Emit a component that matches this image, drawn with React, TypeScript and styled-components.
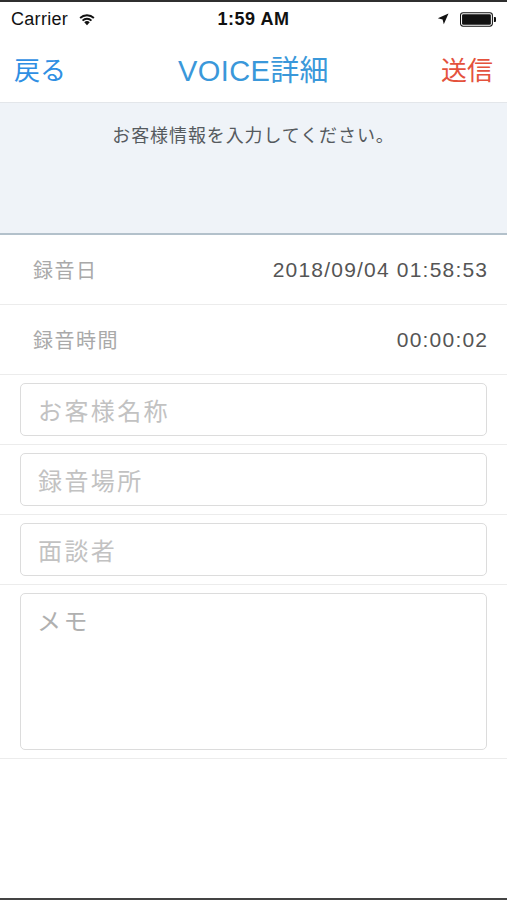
import React from 'react';
import styled, { createGlobalStyle } from 'styled-components';

const GlobalStyle = createGlobalStyle`
    html, body {
        margin: 0;
        padding: 0;
        background: #ffffff;
    }
    * {
        box-sizing: border-box;
    }
`;

const FONT = `"Liberation Sans", "Noto Sans CJK JP", sans-serif`;

const Screen = styled.div`
    display: flex;
    flex-direction: column;
    width: 507px;
    height: 900px;
    border-top: 2px solid #2f2f2f;
    border-bottom: 2px solid #444444;
    font-family: ${FONT};
    background: #ffffff;
    overflow: hidden;
`;

const StatusBar = styled.div`
    display: grid;
    grid-template-columns: 1fr auto 1fr;
    align-items: center;
    height: 34px;
    padding: 0 11px;
    font-size: 18px;
    color: #111;
`;

const StatusLeft = styled.div`
    display: flex;
    align-items: center;
    gap: 10px;
    letter-spacing: 0.3px;
`;

const StatusTime = styled.div`
    font-weight: 700;
    letter-spacing: 0.5px;
`;

const StatusRight = styled.div`
    display: flex;
    align-items: center;
    justify-content: flex-end;
    gap: 11px;
`;

const NavBar = styled.div`
    display: grid;
    grid-template-columns: 1fr auto 1fr;
    align-items: center;
    height: 67px;
    padding: 0 14px 2px 14px;
    border-bottom: 1px solid #e3e6ea;
`;

const NavButton = styled.div<{ $color: string; $align: string }>`
    color: ${(p) => p.$color};
    font-size: 26px;
    justify-self: ${(p) => p.$align};
`;

const NavTitle = styled.div`
    color: #3a98da;
    font-size: 29px;
    letter-spacing: 0.4px;
`;

const InfoPanel = styled.div`
    height: 132px;
    padding-top: 18px;
    background: #eff3f8;
    border-bottom: 2px solid #b3c1cb;
    text-align: center;
    font-size: 18px;
    letter-spacing: 0.9px;
    color: #555a5e;
`;

const Row = styled.div<{ $pad?: string }>`
    display: flex;
    align-items: center;
    justify-content: space-between;
    min-height: 70px;
    padding: ${(p) => p.$pad || '0 20px 0 33px'};
    border-bottom: 1px solid #ececec;
`;

const Label = styled.div`
    font-size: 20px;
    letter-spacing: 1.5px;
    color: #a9a9a9;
`;

const Value = styled.div`
    font-size: 21px;
    letter-spacing: 1.2px;
    margin-right: -1.2px;
    color: #555555;
`;

const Field = styled.div<{ $tall?: boolean }>`
    flex: 1;
    height: ${(p) => (p.$tall ? '157px' : '53px')};
    border: 1px solid #dcdcdc;
    border-radius: 5px;
    padding: ${(p) => (p.$tall ? '8px 16px' : '0 17px')};
    display: flex;
    align-items: ${(p) => (p.$tall ? 'flex-start' : 'center')};
    font-size: 24px;
    letter-spacing: 2.4px;
    color: #c2c2c2;
`;

const MemoText = styled.span`
    color: #b0b0b0;
`;

const Wifi = () => (
    <svg width="18" height="13" viewBox="0 0 17 12">
        <path d="M8.5 11.5 L5.9 8.6 A3.8 3.8 0 0 1 11.1 8.6 Z" fill="#111" />
        <path d="M3.7 6.4 A6.9 6.9 0 0 1 13.3 6.4 L12.1 7.7 A5.2 5.2 0 0 0 4.9 7.7 Z" fill="#111" />
        <path d="M1.4 3.9 A10.2 10.2 0 0 1 15.6 3.9 L14.4 5.2 A8.5 8.5 0 0 0 2.6 5.2 Z" fill="#111" />
    </svg>
);

const LocationArrow = () => (
    <svg width="12" height="12" viewBox="0 0 12 12">
        <path d="M11.5 0.5 L0.8 5.2 L5.6 6.4 L6.8 11.2 Z" fill="#111" />
    </svg>
);

const Battery = () => (
    <svg width="36" height="15" viewBox="0 0 35 14">
        <rect x="0.5" y="0.5" width="31" height="13" rx="2.5" fill="none" stroke="#111" />
        <rect x="2" y="2" width="28" height="10" rx="1.2" fill="#111" />
        <path d="M33 4.5 h1 a1 1 0 0 1 1 1 v3 a1 1 0 0 1 -1 1 h-1 Z" fill="#111" />
    </svg>
);

const details = [
    { label: '録音日', value: '2018/09/04 01:58:53' },
    { label: '録音時間', value: '00:00:02' },
];

const fields = ['お客様名称', '録音場所', '面談者'];

export default function App() {
    return (
        <>
            <GlobalStyle />
            <Screen>
                <StatusBar>
                    <StatusLeft>
                        Carrier
                        <Wifi />
                    </StatusLeft>
                    <StatusTime>1:59 AM</StatusTime>
                    <StatusRight>
                        <LocationArrow />
                        <Battery />
                    </StatusRight>
                </StatusBar>
                <NavBar>
                    <NavButton $color="#2f8fe3" $align="start">戻る</NavButton>
                    <NavTitle>VOICE詳細</NavTitle>
                    <NavButton $color="#e4523d" $align="end">送信</NavButton>
                </NavBar>
                <InfoPanel>お客様情報を入力してください。</InfoPanel>
                {details.map((item) => (
                    <Row key={item.label}>
                        <Label>{item.label}</Label>
                        <Value>{item.value}</Value>
                    </Row>
                ))}
                {fields.map((name) => (
                    <Row key={name} $pad="8px 20px 8px 20px">
                        <Field>{name}</Field>
                    </Row>
                ))}
                <Row $pad="8px 20px 8px 20px">
                    <Field $tall>
                        <MemoText>メモ</MemoText>
                    </Field>
                </Row>
            </Screen>
        </>
    );
}
